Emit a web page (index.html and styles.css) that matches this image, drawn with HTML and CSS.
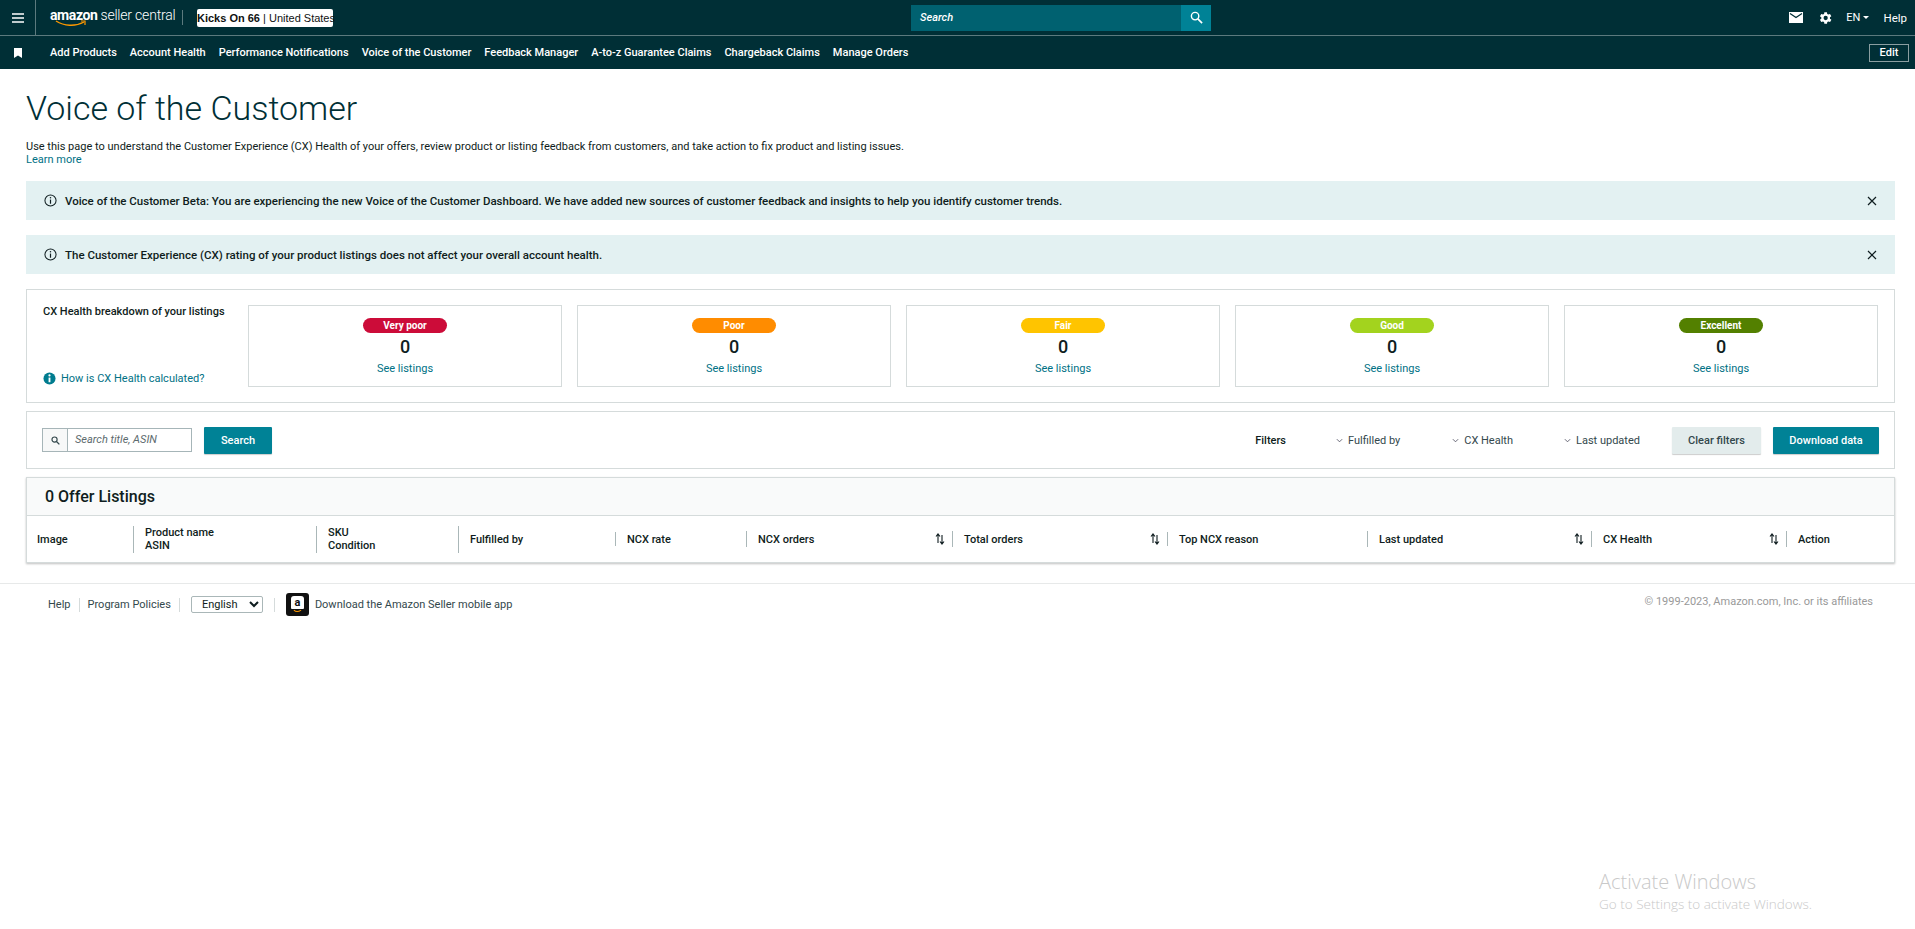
FILE: index.html
```html
<!DOCTYPE html>
<html lang="en">
<head>
<meta charset="UTF-8">
<meta name="viewport" content="width=device-width, initial-scale=1.0">
<title>Voice of the Customer — Seller Central</title>
<link rel="stylesheet" href="styles.css">
</head>
<body>

<header class="topbar">
  <div class="menu-cell">
    <svg class="icon-menu" viewBox="0 0 12 10" width="12" height="10"><path d="M0 1h12M0 5h12M0 9h12" stroke="#fff" stroke-width="1.4"/></svg>
  </div>
  <div class="logo">
    <span class="logo-amazon">amazon</span><span class="logo-rest">seller central</span>
    <svg class="logo-smile" viewBox="0 0 32 8" width="32" height="8"><path d="M1 1c8 5 19 6 28 1" fill="none" stroke="#ff9900" stroke-width="1.4"/><path d="M26 1h4v4" fill="none" stroke="#ff9900" stroke-width="1.2"/></svg>
  </div>
  <span class="logo-divider"></span>
  <div class="store-badge"><b>Kicks On 66</b> | United States</div>
  <div class="top-search">
    <span class="top-search-text">Search</span>
    <span class="top-search-btn">
      <svg viewBox="0 0 14 14" width="13" height="13"><circle cx="5.5" cy="5.5" r="4" fill="none" stroke="#fff" stroke-width="1.5"/><path d="M8.5 8.5l4.5 4.5" stroke="#fff" stroke-width="1.8"/></svg>
    </span>
  </div>
  <div class="top-right">
    <svg viewBox="0 0 14 11" width="14" height="11"><path d="M0 0h14v11H0z" fill="#fff"/><path d="M1 1.5l6 4 6-4" fill="none" stroke="#002f36" stroke-width="1.3"/></svg>
    <svg class="gear" viewBox="0 0 24 24" width="16" height="16"><path fill="#fff" d="M19.4 13a7.5 7.5 0 0 0 0-2l2.1-1.6-2-3.5-2.5 1a7.5 7.5 0 0 0-1.7-1L15 3.300h-4l-.4 2.600a7.5 7.5 0 0 0-1.700 1l-2.500-1-2 3.500L6.500 11a7.500 7.500 0 0 0 0 2l-2.100 1.600 2 3.500 2.500-1a7.500 7.500 0 0 0 1.700 1l.4 2.600h4l.4-2.600a7.500 7.500 0 0 0 1.700-1l2.500 1 2-3.500zM13 15.200a3.200 3.200 0 1 1 0-6.400 3.200 3.200 0 0 1 0 6.400z"/></svg>
    <span class="lang">EN<i class="caret"></i></span>
    <span class="help">Help</span>
  </div>
</header>

<nav class="navbar">
  <svg class="bookmark" viewBox="0 0 8 10" width="8" height="10"><path d="M0 0h8v10L4 7.500 0 10z" fill="#fff"/></svg>
  <a>Add Products</a>
  <a>Account Health</a>
  <a>Performance Notifications</a>
  <a>Voice of the Customer</a>
  <a>Feedback Manager</a>
  <a>A-to-z Guarantee Claims</a>
  <a>Chargeback Claims</a>
  <a>Manage Orders</a>
  <button class="edit-btn">Edit</button>
</nav>

<main class="page">
  <h1>Voice of the Customer</h1>
  <p class="intro">Use this page to understand the Customer Experience (CX) Health of your offers, review product or listing feedback from customers, and take action to fix product and listing issues.<br><a class="link">Learn more</a></p>

  <div class="banner">
    <svg viewBox="0 0 14 14" width="13" height="13"><circle cx="7" cy="7" r="6" fill="none" stroke="#0f1d20" stroke-width="1.1"/><path d="M7 6v4.500" stroke="#0f1d20" stroke-width="1.300"/><circle cx="7" cy="4" r=".8" fill="#0f1d20"/></svg>
    <span class="banner-text">Voice of the Customer Beta: You are experiencing the new Voice of the Customer Dashboard. We have added new sources of customer feedback and insights to help you identify customer trends.</span>
    <svg class="close" viewBox="0 0 10 10" width="10" height="10"><path d="M1 1l8 8M9 1l-8 8" stroke="#0f1d20" stroke-width="1.200"/></svg>
  </div>
  <div class="banner">
    <svg viewBox="0 0 14 14" width="13" height="13"><circle cx="7" cy="7" r="6" fill="none" stroke="#0f1d20" stroke-width="1.1"/><path d="M7 6v4.500" stroke="#0f1d20" stroke-width="1.300"/><circle cx="7" cy="4" r=".8" fill="#0f1d20"/></svg>
    <span class="banner-text">The Customer Experience (CX) rating of your product listings does not affect your overall account health.</span>
    <svg class="close" viewBox="0 0 10 10" width="10" height="10"><path d="M1 1l8 8M9 1l-8 8" stroke="#0f1d20" stroke-width="1.200"/></svg>
  </div>

  <section class="panel health">
    <div class="health-side">
      <div class="health-title">CX Health breakdown of your listings</div>
      <div class="health-how">
        <svg viewBox="0 0 14 14" width="13" height="13"><circle cx="7" cy="7" r="6.500" fill="#007c8f"/><path d="M7 6v5" stroke="#fff" stroke-width="2"/><circle cx="7" cy="3.700" r="1.200" fill="#fff"/></svg>
        <a class="link">How is CX Health calculated?</a>
      </div>
    </div>
    <div class="health-card"><span class="pill pill-verypoor">Very poor</span><div class="count">0</div><a class="link">See listings</a></div>
    <div class="health-card"><span class="pill pill-poor">Poor</span><div class="count">0</div><a class="link">See listings</a></div>
    <div class="health-card"><span class="pill pill-fair">Fair</span><div class="count">0</div><a class="link">See listings</a></div>
    <div class="health-card"><span class="pill pill-good">Good</span><div class="count">0</div><a class="link">See listings</a></div>
    <div class="health-card"><span class="pill pill-excellent">Excellent</span><div class="count">0</div><a class="link">See listings</a></div>
  </section>

  <section class="panel toolbar">
    <div class="search-box">
      <span class="search-icon"><svg viewBox="0 0 14 14" width="9" height="9"><circle cx="5.500" cy="5.500" r="4" fill="none" stroke="#33484c" stroke-width="1.800"/><path d="M8.500 8.500l4.500 4.500" stroke="#33484c" stroke-width="2"/></svg></span>
      <span class="search-placeholder">Search title, ASIN</span>
    </div>
    <button class="btn btn-primary btn-search">Search</button>
    <div class="filters">
      <b class="filters-label">Filters</b>
      <span class="filter filter-fulfilled"><svg viewBox="0 0 8 5" width="7" height="5"><path d="M1 1l3 3 3-3" fill="none" stroke="#556" stroke-width="1"/></svg>Fulfilled by</span>
      <span class="filter filter-health"><svg viewBox="0 0 8 5" width="7" height="5"><path d="M1 1l3 3 3-3" fill="none" stroke="#556" stroke-width="1"/></svg>CX Health</span>
      <span class="filter filter-updated"><svg viewBox="0 0 8 5" width="7" height="5"><path d="M1 1l3 3 3-3" fill="none" stroke="#556" stroke-width="1"/></svg>Last updated</span>
      <button class="btn btn-light">Clear filters</button>
      <button class="btn btn-primary btn-download">Download data</button>
    </div>
  </section>

  <section class="listings">
    <div class="listings-head">0 Offer Listings</div>
    <div class="columns">
      <div class="col col-image">Image</div>
      <div class="col col-name">Product name<br>ASIN</div>
      <div class="col col-sku">SKU<br>Condition</div>
      <div class="col col-fulfilled">Fulfilled by</div>
      <div class="col col-rate">NCX rate</div>
      <div class="col col-orders">NCX orders<svg class="sort" viewBox="0 0 10 12" width="10" height="12"><path d="M3 10V2M1 3.500L3 1l2 2.500M7 2v8M5 8.500L7 11l2-2.500" fill="none" stroke="#0f1d20" stroke-width="1.100"/></svg></div>
      <div class="col col-total">Total orders<svg class="sort" viewBox="0 0 10 12" width="10" height="12"><path d="M3 10V2M1 3.500L3 1l2 2.500M7 2v8M5 8.500L7 11l2-2.500" fill="none" stroke="#0f1d20" stroke-width="1.100"/></svg></div>
      <div class="col col-reason">Top NCX reason</div>
      <div class="col col-updated">Last updated<svg class="sort" viewBox="0 0 10 12" width="10" height="12"><path d="M3 10V2M1 3.500L3 1l2 2.500M7 2v8M5 8.500L7 11l2-2.500" fill="none" stroke="#0f1d20" stroke-width="1.100"/></svg></div>
      <div class="col col-health">CX Health<svg class="sort" viewBox="0 0 10 12" width="10" height="12"><path d="M3 10V2M1 3.500L3 1l2 2.500M7 2v8M5 8.500L7 11l2-2.500" fill="none" stroke="#0f1d20" stroke-width="1.100"/></svg></div>
      <div class="col col-action">Action</div>
    </div>
  </section>
</main>

<footer class="footer">
  <a class="foot-link">Help</a>
  <span class="foot-sep"></span>
  <a class="foot-link">Program Policies</a>
  <span class="foot-sep"></span>
  <select class="foot-select"><option>English</option></select>
  <span class="foot-sep"></span>
  <span class="app-icon">
    <span class="app-tag">a</span>
    <svg viewBox="0 0 10 4" width="9" height="4"><path d="M1 1c2 2 5 2 8 0" fill="none" stroke="#ff9900" stroke-width="1.200"/></svg>
  </span>
  <a class="foot-link app-link">Download the Amazon Seller mobile app</a>
  <span class="copyright">© 1999-2023, Amazon.com, Inc. or its affiliates</span>
</footer>

<div class="watermark">
  <div class="watermark-title">Activate Windows</div>
  <div class="watermark-sub">Go to Settings to activate Windows.</div>
</div>

</body>
</html>
```

FILE: styles.css
```css
* {
  box-sizing: border-box;
}
body {
  margin: 0;
  font-family: Roboto, "Liberation Sans", Arial, sans-serif;
  font-size: 11px;
  color: #0f1d20;
  background: #fff;
  min-height: 929px;
  position: relative;
  overflow: hidden;
}
svg {
  flex: none;
  display: block;
}
.topbar {
  height: 36px;
  background: #002f36;
  border-bottom: 1px solid #5c7a7e;
  display: flex;
  align-items: center;
  color: #fff;
}
.menu-cell {
  width: 36px;
  height: 35px;
  border-right: 1px solid #5c7a7e;
  padding-left: 12px;
  display: flex;
  align-items: center;
}
.logo {
  position: relative;
  margin-left: 14px;
  width: 119px;
  white-space: nowrap;
  line-height: 16px;
  margin-top: -3px;
}
.logo-amazon {
  font-size: 14px;
  font-weight: 700;
  letter-spacing: -0.4px;
}
.logo-rest {
  font-size: 14px;
  font-weight: 300;
  margin-left: 3px;
  letter-spacing: -0.2px;
}
.logo-smile {
  position: absolute;
  left: 5px;
  top: 13px;
}
.logo-divider {
  width: 1px;
  height: 15px;
  background: #5c7a7e;
  margin-left: 13px;
}
.store-badge {
  margin-left: 14px;
  width: 136px;
  height: 18px;
  line-height: 18px;
  background: #fff;
  color: #0f1111;
  border-radius: 2px;
  text-align: center;
  font-size: 11px;
  white-space: nowrap;
  font-family: "Liberation Sans", Arial, sans-serif;
}
.store-badge b {
  font-weight: 700;
}
.top-search {
  margin-left: 578px;
  width: 300px;
  height: 26px;
  background: #006170;
  display: flex;
  align-items: center;
  justify-content: space-between;
}
.top-search-text {
  padding-left: 9px;
  font-size: 11px;
  font-style: italic;
  font-weight: 500;
}
.top-search-btn {
  width: 30px;
  height: 26px;
  background: #008296;
  display: flex;
  align-items: center;
  justify-content: center;
}
.top-right {
  margin-left: auto;
  display: flex;
  align-items: center;
  padding-right: 8px;
  gap: 15px;
}
.gear {
  margin-left: -1px;
}
.lang {
  font-size: 11px;
  display: flex;
  align-items: center;
  gap: 3px;
  margin-left: -2px;
}
.caret {
  width: 0;
  height: 0;
  border-left: 3px solid transparent;
  border-right: 3px solid transparent;
  border-top: 3px solid #fff;
}
.help {
  font-size: 11.5px;
  margin-left: -1px;
}
.navbar {
  height: 33px;
  background: #002f36;
  color: #fff;
  display: flex;
  align-items: center;
  padding-left: 14px;
  padding-right: 6px;
  font-weight: 500;
}
.bookmark {
  margin-right: 28px;
}
.navbar a {
  margin-right: 13px;
  white-space: nowrap;
}
.edit-btn {
  margin-left: auto;
  width: 40px;
  height: 18px;
  background: transparent;
  border: 1px solid #8a9ea1;
  color: #fff;
  font: 500 11px Roboto, sans-serif;
  padding: 0;
}
.page {
  padding: 19px 20px 0 26px;
}
h1 {
  margin: 0;
  font-size: 34px;
  line-height: 40px;
  font-weight: 300;
  color: #002f36;
}
.intro {
  margin: 12px 0 15px;
  line-height: 13px;
  font-size: 11px;
}
.link {
  color: #007185;
}
.banner {
  height: 39px;
  background: #e3f1f2;
  display: flex;
  align-items: center;
  padding-left: 18px;
  padding-right: 18px;
  margin-bottom: 15px;
  font-weight: 500;
}
.banner-text {
  margin-left: 8px;
  font-size: 11.5px;
}
.close {
  margin-left: auto;
}
.panel {
  border: 1px solid #d5dbdb;
}
.health {
  height: 114px;
  padding: 15px 16px;
  display: flex;
  gap: 15px;
  margin-bottom: 8px;
}
.health-side {
  width: 190px;
  margin-right: 0;
  padding-left: 0;
  margin-left: 0;
  flex: none;
  display: flex;
  flex-direction: column;
  justify-content: space-between;
  padding-bottom: 0;
}
.health-title {
  font-weight: 500;
  line-height: 14px;
  padding-top: 0;
}
.health-how {
  display: flex;
  align-items: center;
  gap: 5px;
  margin-bottom: 2px;
}
.health-card {
  flex: 1;
  border: 1px solid #d5dbdb;
  display: flex;
  flex-direction: column;
  align-items: center;
  padding-top: 12px;
}
.pill {
  width: 84px;
  height: 15px;
  line-height: 15px;
  border-radius: 8px;
  color: #fff;
  text-align: center;
  font-size: 10px;
  font-weight: 700;
}
.pill-verypoor { background: #cc0c39; }
.pill-poor { background: #ff8c00; }
.pill-fair { background: #ffc400; }
.pill-good { background: #a3d31e; }
.pill-excellent { background: #538000; }
.count {
  font-size: 18px;
  font-weight: 500;
  line-height: 22px;
  margin-top: 3px;
  color: #0f1d20;
}
.health-card .link {
  margin-top: 4px;
  line-height: 13px;
}
.toolbar {
  height: 58px;
  padding: 0 15px;
  display: flex;
  align-items: center;
  margin-bottom: 8px;
}
.search-box {
  width: 150px;
  height: 24px;
  border: 1px solid #a6b5b8;
  display: flex;
  align-items: stretch;
}
.search-icon {
  width: 25px;
  background: #f7f8f8;
  border-right: 1px solid #a6b5b8;
  display: flex;
  align-items: center;
  justify-content: center;
}
.search-placeholder {
  padding-left: 7px;
  line-height: 22px;
  font-style: italic;
  color: #5d6b6e;
}
.btn {
  height: 27px;
  border: none;
  border-radius: 1px;
  font: 500 11px Roboto, sans-serif;
  box-shadow: 0 1px 1px rgba(0, 0, 0, .2);
  padding: 0;
}
.btn-primary {
  background: #008296;
  color: #fff;
}
.btn-light {
  background: #e3ecec;
  color: #33484c;
  width: 89px;
  margin-left: 32px;
}
.btn-search {
  width: 68px;
  margin-left: 12px;
}
.btn-download {
  width: 106px;
  margin-left: 12px;
}
.filters {
  margin-left: auto;
  display: flex;
  align-items: center;
}
.filters-label {
  font-weight: 500;
}
.filter {
  display: flex;
  align-items: center;
  gap: 5px;
  color: #33484c;
}
.filter-fulfilled { margin-left: 50px; }
.filter-health { margin-left: 52px; }
.filter-updated { margin-left: 51px; }
.listings {
  height: 86px;
  border: 1px solid #d5dbdb;
  box-shadow: 0 1px 2px rgba(0, 0, 0, .25);
}
.listings-head {
  height: 38px;
  line-height: 37px;
  background: #f9fafa;
  border-bottom: 1px solid #d5dbdb;
  padding-left: 18px;
  font-size: 16px;
  font-weight: 500;
}
.columns {
  display: flex;
  height: 46px;
  align-items: center;
  font-weight: 500;
  line-height: 13px;
}
.col {
  position: relative;
  flex: none;
  display: flex;
  align-items: center;
  justify-content: space-between;
  padding: 0 7px 0 11px;
  border-left: 1px solid #aab7b8;
  min-height: 14px;
}
.col-image { width: 106px; border-left: none; padding-left: 10px; }
.col-name { width: 183px; display: block; height: 27px; }
.col-sku { width: 142px; display: block; height: 27px; }
.col-fulfilled { width: 157px; height: 27px; }
.col-rate { width: 131px; height: 14px; }
.col-orders { width: 206px; height: 16px; }
.col-total { width: 215px; height: 16px; }
.col-reason { width: 200px; height: 14px; }
.col-updated { width: 224px; height: 16px; }
.col-health { width: 195px; height: 16px; }
.col-action { width: 100px; height: 16px; }
.sort {
  margin-top: 0;
}
.footer {
  margin-top: 20px;
  border-top: 1px solid #e7e9e9;
  display: flex;
  align-items: center;
  padding: 9px 42px 0 48px;
  color: #33484c;
}
.foot-link {
  white-space: nowrap;
}
.foot-link:first-child {
  color: #33484c;
}
.foot-sep {
  width: 1px;
  height: 14px;
  background: #d5dbdb;
  margin: 0 8px 0 8px;
}
.foot-select {
  width: 72px;
  height: 17px;
  margin: 0 3px;
  font: 11px Roboto, sans-serif;
  color: #0f1d20;
  background: #fff;
  border: 1px solid #aab7b8;
  border-radius: 2px;
  padding: 0 0 0 6px;
}
.app-icon {
  width: 23px;
  height: 23px;
  margin-left: 3px;
  background: #111;
  border-radius: 3px;
  display: flex;
  flex-direction: column;
  align-items: center;
  padding-top: 3px;
}
.app-tag {
  width: 13px;
  height: 13px;
  line-height: 13px;
  background: #fff;
  color: #111;
  font-size: 11px;
  font-weight: 700;
  text-align: center;
  border-radius: 3px 3px 1px 1px;
}
.app-link {
  margin-left: 6px;
}
.copyright {
  margin-left: auto;
  color: #999;
  margin-top: -6px;
}
.watermark {
  position: absolute;
  left: 1599px;
  top: 868px;
  color: #c9c9c9;
  font-family: "Open Sans", sans-serif;
  font-weight: 300;
}
.watermark-title {
  font-size: 20px;
  line-height: 27px;
}
.watermark-sub {
  font-size: 13.5px;
  line-height: 18px;
}
```
